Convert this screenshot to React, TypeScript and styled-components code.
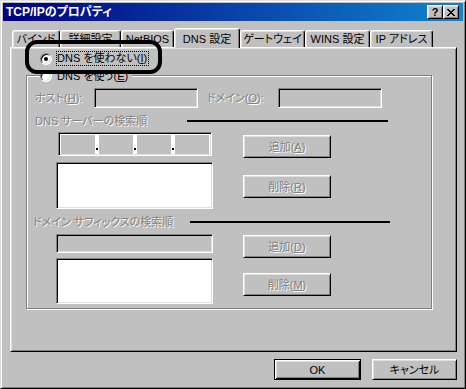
import React from "react";
import styled, { createGlobalStyle } from "styled-components";

const GlobalStyle = createGlobalStyle`
  html, body {
    margin: 0;
    padding: 0;
    background: #c0c0c0;
  }
`;

const Window = styled.div`
  position: relative;
  box-sizing: border-box;
  width: 466px;
  height: 389px;
  padding: 2px;
  background: #c0c0c0;
  border: 1px solid;
  border-color: #dfdfdf #000 #000 #dfdfdf;
  box-shadow: inset 1px 1px #fff, inset -1px -1px #808080;
  display: flex;
  flex-direction: column;
  font-family: "Liberation Sans", "Noto Sans CJK JP", sans-serif;
  font-size: 11px;
  line-height: 14px;
  font-feature-settings: "palt";
  color: #000;
`;

const TitleBar = styled.div`
  height: 18px;
  display: flex;
  align-items: center;
  padding: 0 4px 0 3px;
  background: linear-gradient(90deg, #000080, #1084d0);
  color: #fff;
  font-size: 12px;
  font-weight: bold;
`;

const TitleText = styled.span`
  flex: 1;
`;

const TitleButton = styled.span`
  box-sizing: border-box;
  width: 16px;
  height: 14px;
  display: flex;
  align-items: center;
  justify-content: center;
  background: #c0c0c0;
  color: #000;
  border: 1px solid;
  border-color: #fff #000 #000 #fff;
  box-shadow: inset 1px 1px #dfdfdf, inset -1px -1px #808080;
  font-size: 11px;
  font-weight: bold;
`;

const Body = styled.div`
  padding: 7px 6px 0 7px;
  display: flex;
  flex-direction: column;
`;

const TabStrip = styled.div`
  display: flex;
  align-items: flex-end;
  height: 19px;
  padding-left: 2px;
  position: relative;
  z-index: 2;
`;

const Tab = styled.div<{ $w: number; $active?: boolean }>`
  box-sizing: border-box;
  width: ${(p) => p.$w}px;
  height: ${(p) => (p.$active ? 20 : 17)}px;
  margin-bottom: ${(p) => (p.$active ? -1 : 0)}px;
  padding-top: ${(p) => (p.$active ? 3 : 1)}px;
  text-align: center;
  white-space: nowrap;
  background: #c0c0c0;
  border-top: 1px solid #fff;
  border-left: 1px solid #fff;
  border-right: 1px solid #000;
  border-radius: 3px 3px 0 0;
  box-shadow: inset -1px 0 #808080, inset 1px 1px #dfdfdf;
`;

const Panel = styled.div`
  box-sizing: border-box;
  height: 305px;
  border: 1px solid;
  border-color: #fff #000 #000 #fff;
  box-shadow: inset 1px 1px #dfdfdf, inset -1px -1px #808080;
  display: flex;
  flex-direction: column;
  position: relative;
  z-index: 1;
`;

const RadioRow = styled.div`
  display: flex;
  align-items: center;
  height: 15px;
  margin: 3px 0 0 29px;
`;

const RadioCircle = styled.span<{ $checked?: boolean }>`
  box-sizing: border-box;
  width: 12px;
  height: 12px;
  flex-shrink: 0;
  border-radius: 50%;
  border: 1px solid;
  border-color: #808080 #fff #fff #808080;
  box-shadow: inset 1px 1px #000, inset -1px -1px #dfdfdf;
  background: #fff;
  display: flex;
  align-items: center;
  justify-content: center;

  &::after {
    content: "";
    display: ${(p) => (p.$checked ? "block" : "none")};
    width: 4px;
    height: 4px;
    border-radius: 50%;
    background: #000;
  }
`;

const RadioLabel = styled.span<{ $focused?: boolean }>`
  margin-left: 4px;
  line-height: 13px;
  white-space: nowrap;
  border: 1px dotted ${(p) => (p.$focused ? "#000" : "transparent")};
  padding-right: 1px;
`;

const GroupBox = styled.div`
  box-sizing: border-box;
  width: 406px;
  height: 234px;
  margin: 9px 0 0 15px;
  border: 1px solid #808080;
  box-shadow: inset 1px 1px #fff, 1px 1px #fff;
  display: flex;
  flex-direction: column;
`;

const Caption = styled.div`
  align-self: flex-start;
  display: flex;
  align-items: center;
  height: 14px;
  margin: -7px 0 0 13px;
  padding-right: 2px;
  background: #c0c0c0;
`;

const Disabled = styled.span`
  color: #808080;
  text-shadow: 1px 1px 0 #fff;
  white-space: nowrap;
`;

const FieldRow = styled.div`
  display: flex;
  align-items: center;
  height: 20px;
  margin-top: 5px;
  padding-left: 8px;
`;

const FieldLabel = styled(Disabled)<{ $w: number; $gap?: number }>`
  display: block;
  width: ${(p) => p.$w}px;
  margin-left: ${(p) => p.$gap ?? 0}px;
`;

const Sunken = styled.div<{ $w: number; $h: number; $white?: boolean }>`
  box-sizing: border-box;
  width: ${(p) => p.$w}px;
  height: ${(p) => p.$h}px;
  flex-shrink: 0;
  background: ${(p) => (p.$white ? "#fff" : "#c0c0c0")};
  border: 1px solid;
  border-color: #808080 #fff #fff #808080;
  box-shadow: inset 1px 1px #000, inset -1px -1px #dfdfdf;
`;

const Heading = styled.div<{ $indent: number; $label: number; $line: number }>`
  display: flex;
  align-items: center;
  height: 14px;
  margin-top: 6px;
  padding-left: ${(p) => p.$indent}px;

  ${Disabled} {
    width: ${(p) => p.$label}px;
  }

  &::after {
    content: "";
    width: ${(p) => p.$line}px;
    height: 2px;
    background: #000;
  }
`;

const Section = styled.div<{ $top: number }>`
  display: flex;
  gap: 30px;
  margin-top: ${(p) => p.$top}px;
  padding-left: 29px;
`;

const Column = styled.div<{ $top?: number; $gap?: number }>`
  display: flex;
  flex-direction: column;
  padding-top: ${(p) => p.$top ?? 0}px;
  gap: ${(p) => p.$gap ?? 0}px;
`;

const IpBox = styled(Sunken)`
  margin-left: 2px;
  display: flex;
  padding: 2px 2px 1px 2px;
`;

const IpPart = styled.span`
  width: 34px;
  background: #c0c0c0;
`;

const IpDot = styled.span`
  width: 4px;
  display: flex;
  align-items: flex-end;
  justify-content: center;
  padding-bottom: 4px;

  &::after {
    content: "";
    width: 2px;
    height: 2px;
    background: #000;
  }
`;

const Button = styled.div<{ $w: number; $h: number; $default?: boolean }>`
  box-sizing: border-box;
  width: ${(p) => p.$w}px;
  height: ${(p) => p.$h}px;
  display: flex;
  align-items: center;
  justify-content: center;
  background: #c0c0c0;
  border: 1px solid;
  border-color: ${(p) => (p.$default ? "#000" : "#fff #000 #000 #fff")};
  box-shadow: ${(p) =>
    p.$default
      ? "inset 1px 1px #fff, inset -1px -1px #000, inset 2px 2px #dfdfdf, inset -2px -2px #808080"
      : "inset 1px 1px #dfdfdf, inset -1px -1px #808080"};
  white-space: nowrap;
`;

const ButtonRow = styled.div`
  display: flex;
  justify-content: flex-end;
  gap: 11px;
  margin-top: 7px;
`;

const Annotation = styled.div`
  position: absolute;
  left: 24px;
  top: 39px;
  width: 137px;
  height: 34px;
  box-sizing: border-box;
  border: 4px solid #000;
  border-radius: 12px;
  pointer-events: none;
  z-index: 5;
`;

const tabs = [
  { label: "バインド", w: 48 },
  { label: "詳細設定", w: 61 },
  { label: "NetBIOS", w: 53 },
  { label: "DNS 設定", w: 66, active: true },
  { label: "ゲートウェイ", w: 65 },
  { label: "WINS 設定", w: 65 },
  { label: "IP アドレス", w: 63 },
];

const CloseGlyph = () => (
  <svg width="8" height="7" viewBox="0 0 8 7" shapeRendering="crispEdges">
    <path
      fill="#000"
      d="M0 0h2v1H0zM6 0h2v1H6zM1 1h2v1H1zM5 1h2v1H5zM2 2h4v1H2zM3 3h2v1H3zM2 4h4v1H2zM1 5h2v1H1zM5 5h2v1H5zM0 6h2v1H0zM6 6h2v1H6z"
    />
  </svg>
);

const App: React.FC = () => {
  return (
    <>
      <GlobalStyle />
      <Window>
        <TitleBar>
          <TitleText>TCP/IPのプロパティ</TitleText>
          <TitleButton>?</TitleButton>
          <TitleButton>
            <CloseGlyph />
          </TitleButton>
        </TitleBar>

        <Body>
          <TabStrip>
            {tabs.map((t) => (
              <Tab key={t.label} $w={t.w} $active={t.active}>
                {t.label}
              </Tab>
            ))}
          </TabStrip>

          <Panel>
            <RadioRow>
              <RadioCircle $checked />
              <RadioLabel $focused>
                DNS を使わない(<u>I</u>)
              </RadioLabel>
            </RadioRow>

            <GroupBox>
              <Caption>
                <RadioCircle />
                <RadioLabel>
                  DNS を使う(<u>E</u>)
                </RadioLabel>
              </Caption>

              <FieldRow>
                <FieldLabel $w={59}>
                  ホスト(<u>H</u>):
                </FieldLabel>
                <Sunken $w={104} $h={20} />
                <FieldLabel $w={71} $gap={9}>
                  ドメイン(<u>O</u>):
                </FieldLabel>
                <Sunken $w={104} $h={20} />
              </FieldRow>

              <Heading $indent={8} $label={152} $line={201}>
                <Disabled>DNS サーバーの検索順</Disabled>
              </Heading>

              <Section $top={4}>
                <Column>
                  <IpBox $w={154} $h={24} $white>
                    <IpPart />
                    <IpDot />
                    <IpPart />
                    <IpDot />
                    <IpPart />
                    <IpDot />
                    <IpPart />
                  </IpBox>
                  <Sunken $w={157} $h={47} $white style={{ marginTop: 6 }} />
                </Column>
                <Column $top={3} $gap={17}>
                  <Button $w={88} $h={23}>
                    <Disabled>
                      追加(<u>A</u>)
                    </Disabled>
                  </Button>
                  <Button $w={88} $h={23}>
                    <Disabled>
                      削除(<u>R</u>)
                    </Disabled>
                  </Button>
                </Column>
              </Section>

              <Heading $indent={6} $label={157} $line={200}>
                <Disabled>ドメイン サフィックスの検索順</Disabled>
              </Heading>

              <Section $top={5}>
                <Column $gap={5}>
                  <Sunken $w={157} $h={19} />
                  <Sunken $w={157} $h={46} $white />
                </Column>
                <Column $top={1} $gap={15}>
                  <Button $w={88} $h={23}>
                    <Disabled>
                      追加(<u>D</u>)
                    </Disabled>
                  </Button>
                  <Button $w={88} $h={23}>
                    <Disabled>
                      削除(<u>M</u>)
                    </Disabled>
                  </Button>
                </Column>
              </Section>
            </GroupBox>
          </Panel>

          <ButtonRow>
            <Button $w={87} $h={21} $default>
              OK
            </Button>
            <Button $w={85} $h={21}>
              キャンセル
            </Button>
          </ButtonRow>
        </Body>

        <Annotation />
      </Window>
    </>
  );
};

export default App;
